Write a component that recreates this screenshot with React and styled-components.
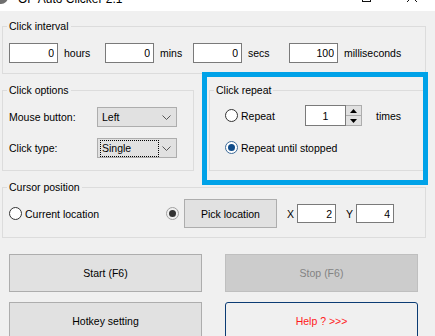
import styled, { createGlobalStyle } from "styled-components";

const GlobalStyle = createGlobalStyle`
  body {
    margin: 0;
    background: #f0f0f0;
    font-family: "Liberation Sans", Arial, sans-serif;
    font-size: 10.5px;
    color: #000;
  }
`;

const Window = styled.div`
  position: relative;
  width: 435px;
  height: 336px;
  overflow: hidden;
  background: #f0f0f0;
`;

const TitleBar = styled.div`
  display: flex;
  align-items: flex-start;
  height: 11px;
  overflow: hidden;
  background: #fff;
`;

const AppIcon = styled.div`
  width: 14px;
  height: 14px;
  margin: -10px 0 0 -6px;
  border-radius: 50%;
  background: #6f6f6f;
  flex-shrink: 0;
`;

const TitleText = styled.span`
  margin: -7px 0 0 10px;
  font-size: 12px;
  line-height: 12px;
  color: #000;
  white-space: nowrap;
`;

const Caption = styled.div`
  display: flex;
  margin-left: auto;
  gap: 35px;
  padding-right: 17px;
  margin-top: -8px;
`;

const MaxBox = styled.div`
  width: 9px;
  height: 9px;
  border: 1px solid #111;
  box-sizing: border-box;
  margin-top: 1px;
`;

const Body = styled.div`
  display: flex;
  flex-direction: column;
  padding: 9px 9px 0 2px;
`;

const Group = styled.fieldset`
  margin: ${(p) => p.$mt || 0}px 0 0 0;
  min-width: 0;
  border: 1px solid #dcdcdc;
  padding: ${(p) => p.$pad};
  ${(p) => p.$grow && "flex: 1;"}
  ${(p) => p.$w && `width: ${p.$w}px; box-sizing: border-box; flex-shrink: 0;`}
`;

const Legend = styled.legend`
  padding: 0 2px;
  margin-left: -2px;
  line-height: 12px;
`;

const IntervalRow = styled.div`
  display: flex;
  align-items: center;
  height: 20px;
`;

const Field = styled.div`
  display: flex;
  align-items: center;
  gap: 6px;
  width: ${(p) => (p.$w ? `${p.$w}px` : "auto")};
  flex-shrink: 0;
`;

const NumInput = styled.input`
  box-sizing: border-box;
  width: ${(p) => p.$w || 49}px;
  height: ${(p) => p.$h || 20}px;
  border: 1px solid #7a7a7a;
  background: #fff;
  padding: 0 3px;
  margin: 0;
  font: inherit;
  color: #000;
  text-align: ${(p) => p.$align || "right"};
  outline: none;
`;

const MidRow = styled.div`
  display: flex;
  gap: 15px;
  margin-top: 10px;
`;

const OptionRow = styled.div`
  display: flex;
  align-items: center;
  height: 20px;
  & + & {
    margin-top: 11px;
  }
`;

const OptionLabel = styled.span`
  width: 88px;
  flex-shrink: 0;
`;

const Select = styled.div`
  box-sizing: border-box;
  display: flex;
  align-items: center;
  width: 80px;
  height: 20px;
  border: 1px solid #adadad;
  background: #e1e1e1;
  padding: 0 5px 0 3px;
`;

const SelectText = styled.span`
  flex: 1;
  display: flex;
  align-items: center;
  span {
    padding: 1px 0 1px 1px;
    margin-left: -1px;
    width: 56px;
    line-height: 13px;
    border: ${(p) => (p.$focus ? "1px dotted #000" : "1px solid transparent")};
  }
`;

const RepeatBody = styled.div`
  margin-left: 9px;
`;

const RepeatRow = styled.div`
  display: flex;
  align-items: center;
  height: ${(p) => p.$h}px;
  margin-top: ${(p) => p.$mt || 0}px;
`;

const RadioLabel = styled.label`
  display: flex;
  align-items: center;
  gap: 3px;
  width: ${(p) => (p.$w ? `${p.$w}px` : "auto")};
  flex-shrink: 0;
`;

const Circle = styled.span`
  box-sizing: border-box;
  width: 13px;
  height: 13px;
  border-radius: 50%;
  border: 1px solid ${(p) => p.$ring || "#333"};
  background: ${(p) => p.$fill || "#fff"};
  display: flex;
  align-items: center;
  justify-content: center;
  flex-shrink: 0;
  &::after {
    content: "";
    display: ${(p) => (p.$checked ? "block" : "none")};
    width: 7px;
    height: 7px;
    border-radius: 50%;
    background: ${(p) => p.$dot || "#0f4c8a"};
  }
`;

const Spin = styled.div`
  display: flex;
  height: 21px;
`;

const SpinButtons = styled.div`
  display: flex;
  flex-direction: column;
  width: 16px;
  box-sizing: border-box;
  border: 1px solid #adadad;
  border-left: none;
`;

const SpinBtn = styled.div`
  flex: 1;
  display: flex;
  align-items: center;
  justify-content: center;
  background: #e1e1e1;
  & + & {
    border-top: 1px solid #adadad;
  }
`;

const Times = styled.span`
  margin-left: 14px;
`;

const CursorRow = styled.div`
  display: flex;
  align-items: center;
  height: 29px;
`;

const PickButton = styled.div`
  box-sizing: border-box;
  display: flex;
  align-items: center;
  justify-content: center;
  width: 93px;
  height: 29px;
  margin-left: 5px;
  border: 1px solid #adadad;
  background: #e1e1e1;
`;

const Coord = styled.span`
  margin: 0 ${(p) => p.$gap}px 0 ${(p) => p.$ml}px;
`;

const ButtonGrid = styled.div`
  display: grid;
  grid-template-columns: 193px 193px;
  grid-auto-rows: 38px;
  column-gap: 23px;
  row-gap: 10px;
  margin: 16px 0 0 7px;
`;

const Button = styled.div`
  box-sizing: border-box;
  display: flex;
  align-items: center;
  justify-content: center;
  border: 1px solid ${(p) => (p.$disabled ? "#bfbfbf" : p.$focus ? "#0b3c74" : "#adadad")};
  border-radius: ${(p) => (p.$focus ? "3px" : "0")};
  background: ${(p) => (p.$disabled ? "#cccccc" : p.$focus ? "#f0f0f0" : "#e1e1e1")};
  color: ${(p) => (p.$disabled ? "#838383" : p.$color || "#000")};
`;

const Highlight = styled.div`
  position: absolute;
  left: 202px;
  top: 72px;
  width: 226px;
  height: 113px;
  box-sizing: border-box;
  border: 5px solid #00a2e8;
  pointer-events: none;
`;

const Chevron = () => (
  <svg width="9" height="5" viewBox="0 0 9 5">
    <polyline points="0.5,0.5 4.5,4.5 8.5,0.5" fill="none" stroke="#555" strokeWidth="1" />
  </svg>
);

const Arrow = ({ up }) => (
  <svg width="7" height="4" viewBox="0 0 7 4">
    <polygon points={up ? "3.5,0 7,4 0,4" : "0,0 7,0 3.5,4"} fill="#000" />
  </svg>
);

export default function App() {
  return (
    <>
      <GlobalStyle />
      <Window>
        <TitleBar>
          <AppIcon />
          <TitleText>OP Auto Clicker 2.1</TitleText>
          <Caption>
            <MaxBox />
            <svg width="12" height="11" viewBox="0 0 12 11">
              <path d="M1 0 L11 10 M11 0 L1 10" stroke="#111" strokeWidth="1" />
            </svg>
          </Caption>
        </TitleBar>

        <Body>
          <Group $pad="11px 6px 10px 6px">
            <Legend>Click interval</Legend>
            <IntervalRow>
              <Field $w={96}>
                <NumInput defaultValue="0" readOnly />
                hours
              </Field>
              <Field $w={88}>
                <NumInput defaultValue="0" readOnly />
                mins
              </Field>
              <Field $w={96}>
                <NumInput defaultValue="0" readOnly />
                secs
              </Field>
              <Field>
                <NumInput defaultValue="100" readOnly />
                milliseconds
              </Field>
            </IntervalRow>
          </Group>

          <MidRow>
            <Group $w={192} $pad="11px 6px 12px 6px">
              <Legend>Click options</Legend>
              <OptionRow>
                <OptionLabel>Mouse button:</OptionLabel>
                <Select>
                  <SelectText>
                    <span>Left</span>
                  </SelectText>
                  <Chevron />
                </Select>
              </OptionRow>
              <OptionRow>
                <OptionLabel>Click type:</OptionLabel>
                <Select>
                  <SelectText $focus>
                    <span>Single</span>
                  </SelectText>
                  <Chevron />
                </Select>
              </OptionRow>
            </Group>

            <Group $grow $pad="9px 6px 12px 6px">
              <Legend>Click repeat</Legend>
              <RepeatBody>
                <RepeatRow $h={21}>
                  <RadioLabel $w={80}>
                    <Circle />
                    Repeat
                  </RadioLabel>
                  <Spin>
                    <NumInput $w={41} $h={21} $align="center" defaultValue="1" readOnly />
                    <SpinButtons>
                      <SpinBtn>
                        <Arrow up />
                      </SpinBtn>
                      <SpinBtn>
                        <Arrow />
                      </SpinBtn>
                    </SpinButtons>
                  </Spin>
                  <Times>times</Times>
                </RepeatRow>
                <RepeatRow $h={13} $mt={15}>
                  <RadioLabel>
                    <Circle $checked $ring="#3c6a98" />
                    Repeat until stopped
                  </RadioLabel>
                </RepeatRow>
              </RepeatBody>
            </Group>
          </MidRow>

          <Group $mt={10} $pad="6px 6px 9px 6px">
            <Legend>Cursor position</Legend>
            <CursorRow>
              <RadioLabel $w={157}>
                <Circle />
                Current location
              </RadioLabel>
              <Circle $checked $ring="#a0a0a0" $fill="#f0f0f0" $dot="#333" />
              <PickButton>Pick location</PickButton>
              <Coord $ml={10} $gap={3}>X</Coord>
              <NumInput $w={39} $h={19} defaultValue="2" readOnly />
              <Coord $ml={10} $gap={3}>Y</Coord>
              <NumInput $w={38} $h={19} defaultValue="4" readOnly />
            </CursorRow>
          </Group>

          <ButtonGrid>
            <Button>Start (F6)</Button>
            <Button $disabled>Stop (F6)</Button>
            <Button>Hotkey setting</Button>
            <Button $focus $color="#ff1a1a">
              Help ? &gt;&gt;&gt;
            </Button>
          </ButtonGrid>
        </Body>

        <Highlight />
      </Window>
    </>
  );
}
